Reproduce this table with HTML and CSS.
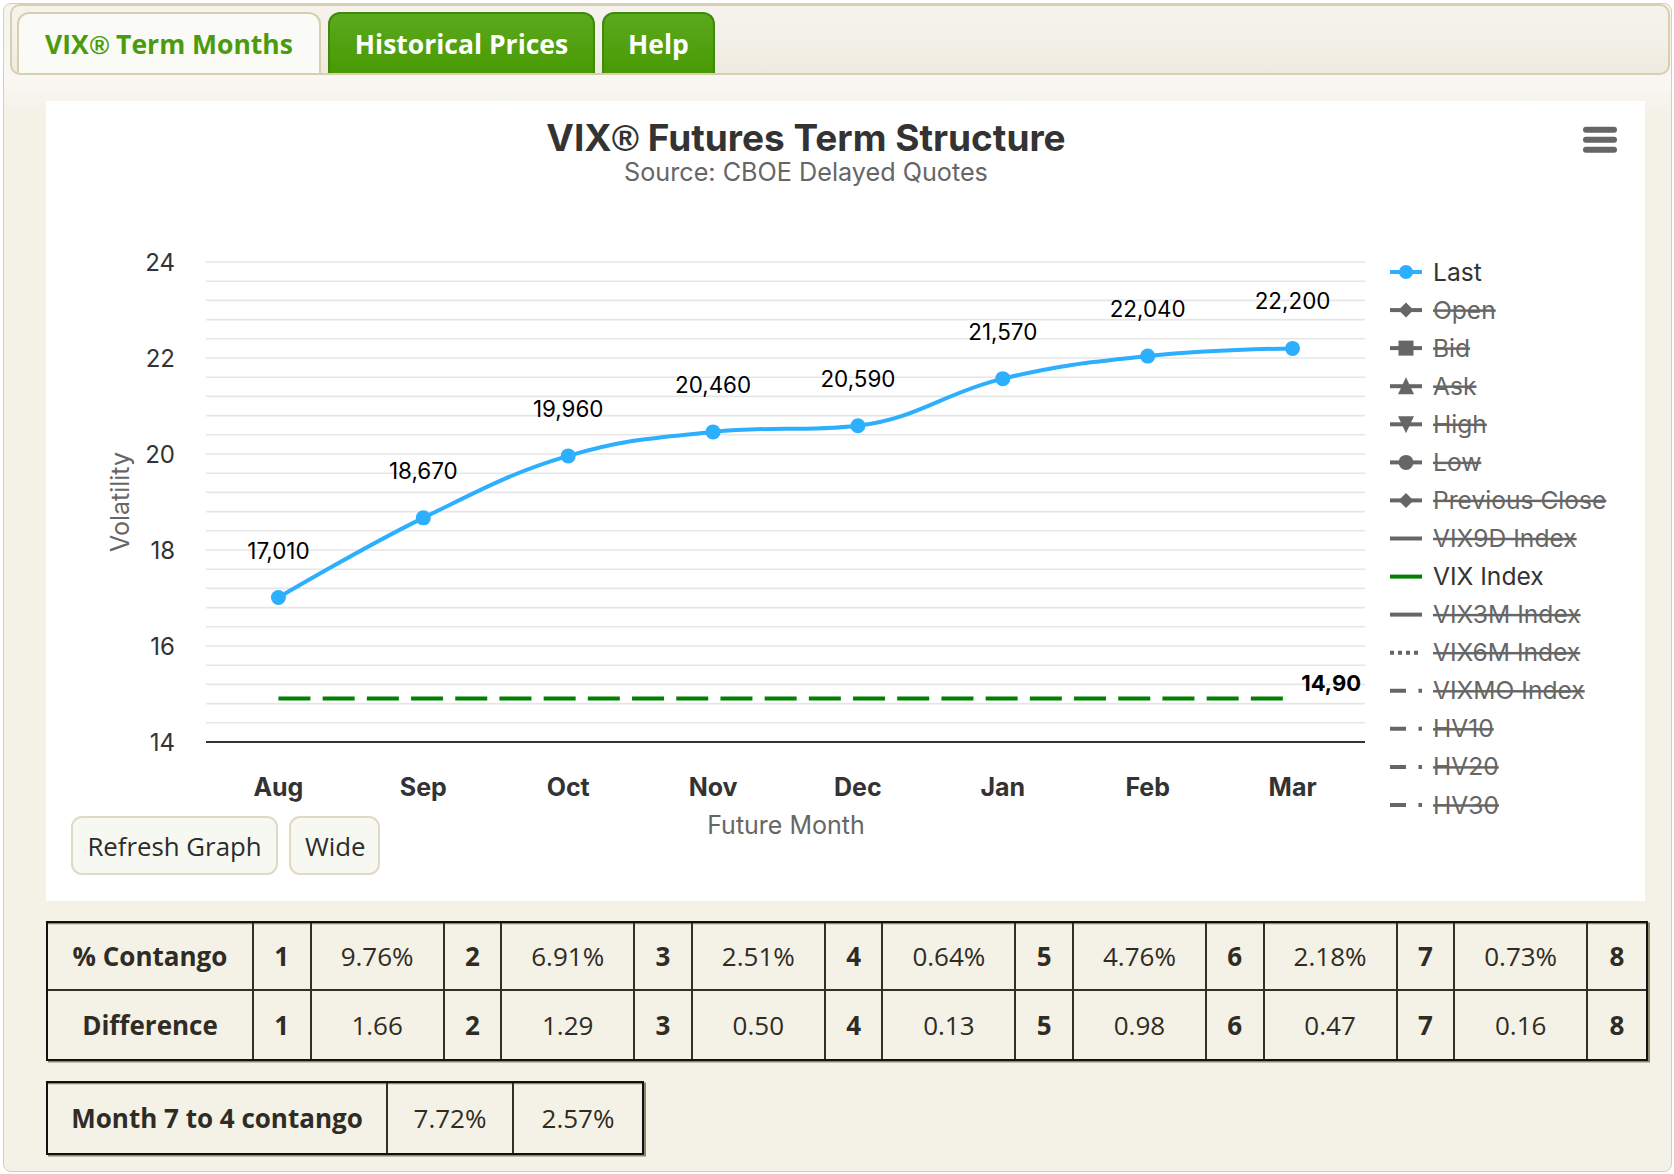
FILE: index.html
```html
<!DOCTYPE html>
<html lang="en">
<head>
<meta charset="utf-8">
<title>VIX Futures Term Structure</title>
<link rel="stylesheet" href="styles.css">
</head>
<body>
<div class="frame">
  <div class="tabbar">
    <a class="tab tab-active tab-term"><span class="tab-label">VIX<span class="reg">®</span> Term Months</span></a>
    <a class="tab tab-green tab-hist"><span class="tab-label">Historical Prices</span></a>
    <a class="tab tab-green tab-help"><span class="tab-label">Help</span></a>
  </div>

  <div class="chart-panel">
    <svg class="chart-svg" width="1599" height="800" viewBox="46 101 1599 800" xmlns="http://www.w3.org/2000/svg">
      <text class="ch-title" x="806" y="151" text-anchor="middle">VIX<tspan class="reg-svg">®</tspan> Futures Term Structure</text>
      <text class="ch-subtitle" x="806" y="181" text-anchor="middle">Source: CBOE Delayed Quotes</text>

      <g class="menu-icon">
        <line x1="1586" y1="129.7" x2="1614" y2="129.7"/>
        <line x1="1586" y1="139.7" x2="1614" y2="139.7"/>
        <line x1="1586" y1="149.7" x2="1614" y2="149.7"/>
      </g>

      <path class="grid" d="M206 262H1365M206 281.2H1365M206 300.4H1365M206 319.6H1365M206 338.8H1365M206 358H1365M206 377.2H1365M206 396.4H1365M206 415.6H1365M206 434.8H1365M206 454H1365M206 473.2H1365M206 492.4H1365M206 511.6H1365M206 530.8H1365M206 550H1365M206 569.2H1365M206 588.4H1365M206 607.6H1365M206 626.8H1365M206 646H1365M206 665.2H1365M206 684.4H1365M206 703.6H1365M206 722.8H1365"/>
      <line class="axis" x1="206" y1="742" x2="1365" y2="742"/>

      <g class="ylabels">
        <text x="175" y="270.5">24</text>
        <text x="175" y="366.5">22</text>
        <text x="175" y="462.5">20</text>
        <text x="175" y="558.5">18</text>
        <text x="175" y="654.5">16</text>
        <text x="175" y="750.5">14</text>
      </g>
      <text class="axis-title" transform="translate(121 502) rotate(-90)" text-anchor="middle" y="8">Volatility</text>

      <g class="xlabels">
        <text x="278.4" y="796">Aug</text>
        <text x="423.3" y="796">Sep</text>
        <text x="568.2" y="796">Oct</text>
        <text x="713.1" y="796">Nov</text>
        <text x="857.9" y="796">Dec</text>
        <text x="1002.8" y="796">Jan</text>
        <text x="1147.7" y="796">Feb</text>
        <text x="1292.6" y="796">Mar</text>
      </g>
      <text class="axis-title" x="786" y="834" text-anchor="middle">Future Month</text>

      <path class="vix-line" d="M278.44 698.6H1292.56"/>
      <text class="vix-label" x="1361" y="691" text-anchor="end">14,90</text>

      <path class="last-line" d="M278.44 597.52C278.44 597.52 365.36 546.16 423.31 517.84C481.26 489.52 510.24 473.1 568.19 455.92C626.14 438.74 655.11 437.97 713.06 431.92C771.01 425.87 799.99 431.92 857.94 425.68C915.89 419.44 944.86 392.56 1002.81 378.64C1060.76 364.72 1089.74 362.13 1147.69 356.08C1205.64 350.03 1292.56 348.4 1292.56 348.4"/>
      <g class="last-points">
        <circle cx="278.44" cy="597.52" r="7.5"/>
        <circle cx="423.31" cy="517.84" r="7.5"/>
        <circle cx="568.19" cy="455.92" r="7.5"/>
        <circle cx="713.06" cy="431.92" r="7.5"/>
        <circle cx="857.94" cy="425.68" r="7.5"/>
        <circle cx="1002.81" cy="378.64" r="7.5"/>
        <circle cx="1147.69" cy="356.08" r="7.5"/>
        <circle cx="1292.56" cy="348.4" r="7.5"/>
      </g>
      <g class="data-labels">
        <text x="278.44" y="558.5">17,010</text>
        <text x="423.31" y="479">18,670</text>
        <text x="568.19" y="417">19,960</text>
        <text x="713.06" y="393">20,460</text>
        <text x="857.94" y="386.7">20,590</text>
        <text x="1002.81" y="339.6">21,570</text>
        <text x="1147.69" y="317">22,040</text>
        <text x="1292.56" y="309.4">22,200</text>
      </g>

      <g class="legend">
        <g>
          <line class="sym-last" x1="1390" y1="272" x2="1422" y2="272"/>
          <circle class="sym-last-pt" cx="1406" cy="272" r="7"/>
          <text class="lg-on" x="1433" y="280.5">Last</text>
        </g>
        <g>
          <line class="sym-off" x1="1390" y1="310.1" x2="1422" y2="310.1"/>
          <polygon class="sym-off-fill" points="1406,302.6 1413.5,310.1 1406,317.6 1398.5,310.1"/>
          <text class="lg-off" x="1433" y="318.6">Open</text>
        </g>
        <g>
          <line class="sym-off" x1="1390" y1="348.1" x2="1422" y2="348.1"/>
          <rect class="sym-off-fill" x="1398.5" y="340.6" width="15" height="15"/>
          <text class="lg-off" x="1433" y="356.6">Bid</text>
        </g>
        <g>
          <line class="sym-off" x1="1390" y1="386.2" x2="1422" y2="386.2"/>
          <polygon class="sym-off-fill" points="1406,377.2 1414,394.2 1398,394.2"/>
          <text class="lg-off" x="1433" y="394.7">Ask</text>
        </g>
        <g>
          <line class="sym-off" x1="1390" y1="424.3" x2="1422" y2="424.3"/>
          <polygon class="sym-off-fill" points="1398,416.3 1414,416.3 1406,433.3"/>
          <text class="lg-off" x="1433" y="432.8">High</text>
        </g>
        <g>
          <line class="sym-off" x1="1390" y1="462.4" x2="1422" y2="462.4"/>
          <circle class="sym-off-fill" cx="1406" cy="462.4" r="7.5"/>
          <text class="lg-off" x="1433" y="470.9">Low</text>
        </g>
        <g>
          <line class="sym-off" x1="1390" y1="500.4" x2="1422" y2="500.4"/>
          <polygon class="sym-off-fill" points="1406,492.9 1413.5,500.4 1406,507.9 1398.5,500.4"/>
          <text class="lg-off" x="1433" y="508.9">Previous Close</text>
        </g>
        <g>
          <line class="sym-off" x1="1390" y1="538.5" x2="1422" y2="538.5"/>
          <text class="lg-off" x="1433" y="547">VIX9D Index</text>
        </g>
        <g>
          <line class="sym-vix" x1="1390" y1="576.6" x2="1422" y2="576.6"/>
          <text class="lg-on" x="1433" y="585.1">VIX Index</text>
        </g>
        <g>
          <line class="sym-off" x1="1390" y1="614.6" x2="1422" y2="614.6"/>
          <text class="lg-off" x="1433" y="623.1">VIX3M Index</text>
        </g>
        <g>
          <line class="sym-off dot" x1="1390" y1="652.7" x2="1422" y2="652.7"/>
          <text class="lg-off" x="1433" y="661.2">VIX6M Index</text>
        </g>
        <g>
          <line class="sym-off dashdot" x1="1390" y1="690.8" x2="1422" y2="690.8"/>
          <text class="lg-off" x="1433" y="699.3">VIXMO Index</text>
        </g>
        <g>
          <line class="sym-off dashdot" x1="1390" y1="728.8" x2="1422" y2="728.8"/>
          <text class="lg-off" x="1433" y="737.3">HV10</text>
        </g>
        <g>
          <line class="sym-off dashdot" x1="1390" y1="766.9" x2="1422" y2="766.9"/>
          <text class="lg-off" x="1433" y="775.4">HV20</text>
        </g>
        <g>
          <line class="sym-off dashdot" x1="1390" y1="805" x2="1422" y2="805"/>
          <text class="lg-off" x="1433" y="813.5">HV30</text>
        </g>
      </g>
    </svg>
    <div class="chart-actions">
      <button class="btn btn-refresh" type="button">Refresh Graph</button>
      <button class="btn btn-wide" type="button">Wide</button>
    </div>
  </div>

  <table class="stats stats-main">
    <colgroup>
      <col class="c-label"><col class="c-num"><col class="c-val"><col class="c-num"><col class="c-val"><col class="c-num"><col class="c-val"><col class="c-num"><col class="c-val"><col class="c-num"><col class="c-val"><col class="c-num"><col class="c-val"><col class="c-num"><col class="c-val"><col class="c-num">
    </colgroup>
    <tr>
      <th>% Contango</th>
      <th>1</th><td>9.76%</td>
      <th>2</th><td>6.91%</td>
      <th>3</th><td>2.51%</td>
      <th>4</th><td>0.64%</td>
      <th>5</th><td>4.76%</td>
      <th>6</th><td>2.18%</td>
      <th>7</th><td>0.73%</td>
      <th>8</th>
    </tr>
    <tr>
      <th>Difference</th>
      <th>1</th><td>1.66</td>
      <th>2</th><td>1.29</td>
      <th>3</th><td>0.50</td>
      <th>4</th><td>0.13</td>
      <th>5</th><td>0.98</td>
      <th>6</th><td>0.47</td>
      <th>7</th><td>0.16</td>
      <th>8</th>
    </tr>
  </table>

  <table class="stats stats-month">
    <colgroup>
      <col class="m-label"><col class="m-val"><col class="m-val2">
    </colgroup>
    <tr>
      <th>Month 7 to 4 contango</th>
      <td>7.72%</td>
      <td>2.57%</td>
    </tr>
  </table>
</div>
</body>
</html>
```

FILE: styles.css
```css
* { box-sizing: border-box; }

html, body {
  margin: 0;
  padding: 0;
  background: #ffffff;
}

.frame {
  margin: 3px 0 0 3px;
  width: 1669px;
  padding: 0 0 16px 0;
  border: 1px solid #d8cfb3;
  border-radius: 8px;
  background: linear-gradient(to bottom, #f6f4ec 0px, #f8f7f1 72px, #f8f7f1 82px, #f4f1e6 112px, #f4f1e6 100%);
}

/* ---------- tabs ---------- */
.tabbar {
  margin: 0 1px 0 6px;
  height: 71px;
  padding: 6px 0 0 5px;
  display: flex;
  align-items: flex-start;
  gap: 7px;
  border: 2px solid #d8cfb3;
  border-radius: 10px;
  background: linear-gradient(to bottom, #f5f3ec 0%, #f3f0e7 55%, #eeeadf 100%);
}

.tab {
  display: flex;
  align-items: center;
  justify-content: center;
  height: 61px;
  border-style: solid;
  border-width: 2px 2px 0 2px;
  border-radius: 12px 12px 0 0;
  font-family: "Open Sans", "DejaVu Sans", sans-serif;
  font-weight: 700;
  font-size: 26.5px;
  text-decoration: none;
  white-space: nowrap;
  cursor: pointer;
}

.tab-label {
  display: block;
}

.reg {
  font-family: "Liberation Sans", Arial, sans-serif;
  font-weight: 700;
  margin-left: 1px;
}

.tab-active {
  background: #fafaf6;
  border-color: #d8cfb3;
  color: #4b9b0c;
}

.tab-green {
  background: linear-gradient(to bottom, #5ba91e 0%, #53a212 45%, #489b03 100%);
  border-color: #3f8a0b;
  color: #ffffff;
}

.tab-term { width: 304px; }
.tab-hist { width: 267px; }
.tab-help { width: 113px; }

/* ---------- chart ---------- */
.chart-panel {
  position: relative;
  margin: 26px 0 0 42px;
  width: 1599px;
  height: 800px;
  background: #ffffff;
}

.chart-svg {
  display: block;
  font-family: Inter, "Noto Sans", sans-serif;
}

.ch-title {
  font-size: 37px;
  font-weight: 700;
  fill: #333333;
}

.reg-svg {
  font-family: "Liberation Sans", Arial, sans-serif;
  font-weight: 700;
}

.ch-subtitle {
  font-size: 25.2px;
  fill: #666666;
}

.menu-icon line {
  stroke: #666666;
  stroke-width: 6;
  stroke-linecap: round;
}

.grid {
  stroke: #e6e6e6;
  stroke-width: 1.6;
  fill: none;
}

.axis {
  stroke: #333333;
  stroke-width: 2;
}

.ylabels text {
  font-size: 24px;
  fill: #333333;
  text-anchor: end;
}

.xlabels text {
  font-size: 25px;
  font-weight: 700;
  fill: #333333;
  text-anchor: middle;
}

.axis-title {
  font-size: 25px;
  fill: #666666;
}

.vix-line {
  stroke: #008000;
  stroke-width: 4;
  stroke-dasharray: 32 12.2;
  fill: none;
}

.vix-label {
  font-size: 22px;
  font-weight: 700;
  fill: #000000;
}

.last-line {
  stroke: #2caffe;
  stroke-width: 4;
  fill: none;
  stroke-linecap: round;
}

.last-points circle {
  fill: #2caffe;
}

.data-labels text {
  font-size: 22.4px;
  fill: #000000;
  text-anchor: middle;
}

.legend text {
  font-size: 24.6px;
}

.lg-on {
  fill: #333333;
}

.lg-off {
  fill: #666666;
  text-decoration: line-through;
}

.sym-last {
  stroke: #2caffe;
  stroke-width: 4;
}

.sym-last-pt {
  fill: #2caffe;
}

.sym-off {
  stroke: #666666;
  stroke-width: 4;
}

.sym-off-fill {
  fill: #666666;
}

.sym-vix {
  stroke: #008000;
  stroke-width: 4;
}

.dot {
  stroke-dasharray: 4 4;
}

.dashdot {
  stroke-dasharray: 16 12.5 4 12;
}

.chart-actions {
  position: absolute;
  left: 25px;
  top: 715px;
  display: flex;
  gap: 11px;
}

.btn {
  height: 59px;
  padding: 0 14px;
  border: 2px solid #e0d9c3;
  border-radius: 11px;
  background: #f8f8f2;
  color: #2b2b2b;
  font-family: "Open Sans", "DejaVu Sans", sans-serif;
  font-size: 25.8px;
  cursor: pointer;
}

.btn-refresh { width: 207px; }
.btn-wide { width: 91px; }

/* ---------- tables ---------- */
.stats {
  margin: 20px 0 0 42px;
  border-collapse: separate;
  border-spacing: 0;
  table-layout: fixed;
  border: 2px solid #111111;
  box-shadow: inset 0 1.3px 0 #8e876b, 2px 1.5px 0 #8e876b;
  font-family: "Open Sans", "DejaVu Sans", sans-serif;
  font-size: 26px;
  color: #2f2c25;
}

.stats th,
.stats td {
  padding: 0;
  text-align: center;
  white-space: nowrap;
  border-right: 2px solid #332f27;
  border-bottom: 2px solid #332f27;
}

.stats th { font-weight: 700; }
.stats td { font-weight: 400; }

.stats tr > :last-child { border-right: none; }
.stats tr:last-child > * { border-bottom: none; }

.stats-main { width: 1598px; }
.stats-main tr { height: 68px; }

.c-label { width: 206px; }
.c-num { width: 57.6px; }
.c-val { width: 133px; }

.stats-month { width: 594px; }
.stats-month tr { height: 70px; }

.m-label { width: 340px; }
.m-val { width: 126px; }
.m-val2 { width: 128px; }
```
